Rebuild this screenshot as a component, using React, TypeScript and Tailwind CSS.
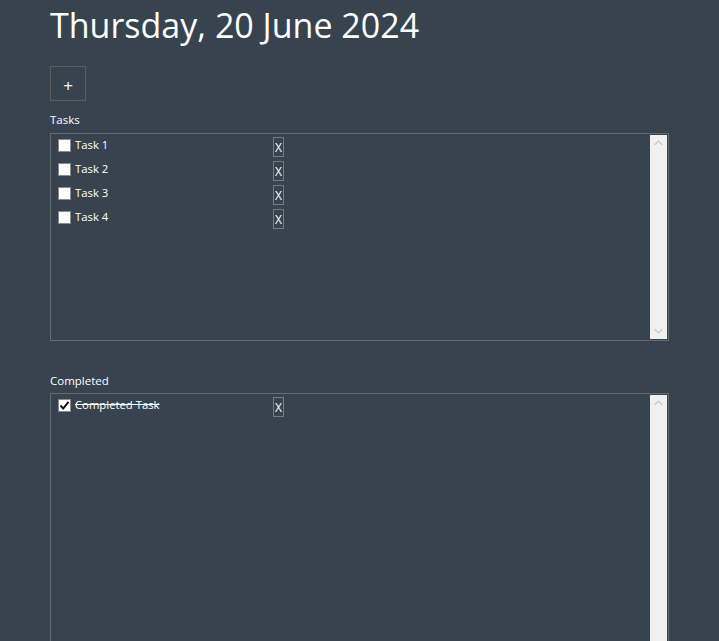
import React from "react";

const font = { fontFamily: '"Segoe UI", "Open Sans", "Noto Sans", sans-serif' };

function Scrollbar() {
  return (
    <div className="absolute right-[1px] top-[1px] bottom-[1px] w-[17px] bg-[#f0f0f0] flex flex-col items-center justify-between py-[5px]">
      <svg width="9" height="6" viewBox="0 0 9 6"><path d="M0.5 5 L4.5 1 L8.5 5" fill="none" stroke="#c8c8c8" strokeWidth="1.2" /></svg>
      <svg width="9" height="6" viewBox="0 0 9 6"><path d="M0.5 1 L4.5 5 L8.5 1" fill="none" stroke="#c8c8c8" strokeWidth="1.2" /></svg>
    </div>
  );
}

function Row({ label, done }: { label: string; done?: boolean }) {
  return (
    <div className="flex items-start h-[24px]">
      <div className="w-[222px] flex items-center pl-[7px] pt-[1px]">
        <div className="w-[13px] h-[13px] bg-white border border-[#8a8a8a] flex items-center justify-center shrink-0">
          {done && (
            <svg width="11" height="11" viewBox="0 0 11 11">
              <path d="M1.5 5.5 L4.2 8.5 L9.5 1.8" fill="none" stroke="#111" strokeWidth="2" />
            </svg>
          )}
        </div>
        <span className={"ml-[4px] text-[11.3px] text-white leading-[14px]" + (done ? " line-through" : "")}>{label}</span>
      </div>
      <div className="w-[11px] h-[20px] border border-[#7a7a7a] flex items-center justify-center text-[12px] text-white leading-none pt-[2px]">X</div>
    </div>
  );
}

export default function App() {
  return (
    <div className="h-[641px] bg-[#37434f] pl-[50px] pr-[50px] overflow-hidden" style={font}>
      <h1 className="text-[34px] text-white leading-[50px] font-normal">Thursday, 20 June 2024</h1>
      <div className="mt-[16px] w-[36px] h-[35px] border border-[#5c5c5c] flex items-center justify-center text-white text-[17px] leading-none pt-[3px]">+</div>
      <div className="mt-[11px] text-[11.5px] text-white leading-[16px]">Tasks</div>
      <div className="mt-[5px] relative w-[619px] h-[208px] border border-[#666a6e] pt-[3px]">
        <Row label="Task 1" />
        <Row label="Task 2" />
        <Row label="Task 3" />
        <Row label="Task 4" />
        <Scrollbar />
      </div>
      <div className="mt-[32px] text-[11.5px] text-white leading-[16px]">Completed</div>
      <div className="mt-[4px] relative w-[619px] h-[300px] border border-[#666a6e] pt-[3px]">
        <Row label="Completed Task" done />
        <Scrollbar />
      </div>
    </div>
  );
}
